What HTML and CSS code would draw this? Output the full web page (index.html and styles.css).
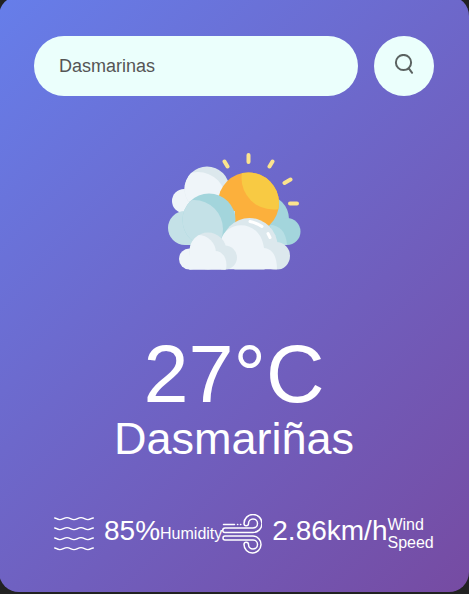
FILE: index.html
```
<!DOCTYPE html>
<html lang="en">
<head>
<meta charset="utf-8">
<meta name="viewport" content="width=device-width, initial-scale=1">
<title>Weather</title>
<link rel="stylesheet" href="styles.css">
</head>
<body>
<main class="card">
  <form class="search">
    <input class="search-input" type="text" aria-label="City name" value="Dasmarinas" spellcheck="false">
    <button class="search-button" type="button" aria-label="Search">
      <svg width="24" height="24" viewBox="0 0 24 24" fill="none" stroke="#5b6361" stroke-width="2" stroke-linecap="round"><circle cx="11.500" cy="8.500" r="7.600"/><path d="M15.500 15.300l1.300-.9 3.300 4.400"/></svg>
    </button>
  </form>
  <section class="weather">
    <svg class="weather-icon" viewBox="149 126 170 170" aria-hidden="true">
      <defs>
        <clipPath id="back-cloud"><circle cx="207" cy="189" r="22.500"/></clipPath>
        <clipPath id="middle-cloud"><circle cx="209" cy="220" r="26.500"/></clipPath>
        <clipPath id="sun"><circle cx="248.500" cy="203" r="30.500"/></clipPath>
        <clipPath id="front-cloud"><path d="M221 214h70v55.500h-70z"/></clipPath>
        <clipPath id="small-cloud"><circle cx="208" cy="251" r="18.500"/></clipPath>
      </defs>
      <path d="M248.500 155v7M272.500 161.500l-3 5M290.500 179.500l-6 3.500M290 203.500h7M224.500 161.500l3 5" stroke="#fbe38e" stroke-width="4" stroke-linecap="round"/>
      <circle cx="184" cy="201" r="12" fill="#eff5f9"/>
      <circle cx="207" cy="189" r="22.500" fill="#dce8ed"/>
      <circle cx="198" cy="200" r="28" fill="#eff5f9" clip-path="url(#back-cloud)"/>
      <circle cx="265" cy="219" r="24" fill="#a3d5dc"/>
      <circle cx="287" cy="231.500" r="13.500" fill="#a3d5dc"/>
      <circle cx="248.500" cy="203" r="30.500" fill="#fcb03c"/>
      <circle cx="273" cy="178" r="31.500" fill="#f8ca43" clip-path="url(#sun)"/>
      <path d="M185 211h50v34h-50z" fill="#c4e1e7"/>
      <circle cx="185" cy="228" r="17" fill="#c4e1e7"/>
      <circle cx="209" cy="220" r="26.500" fill="#a3d5dc"/>
      <circle cx="194" cy="229" r="29" fill="#c4e1e7" clip-path="url(#middle-cloud)"/>
      <path d="M270 225c9 0 16 6 17 20h-12z" fill="#b8dfe5"/>
      <g clip-path="url(#front-cloud)">
        <circle cx="249.500" cy="246" r="28" fill="#dce8ed"/>
        <circle cx="276" cy="256" r="14" fill="#dce8ed"/>
        <path d="M221 269.500V240c5-20 39-22 43 8 8 1 13 7 13 21.500z" fill="#eff5f9"/>
        <path d="M250 221.500c5 1 9 3 12 5m6 7l2 4" fill="none" stroke="#fff" stroke-width="3" stroke-linecap="round"/>
      </g>
      <path d="M189 249h36v20.500h-36z" fill="#eff5f9"/>
      <circle cx="189.500" cy="259" r="10.500" fill="#eff5f9"/>
      <circle cx="225" cy="257.500" r="12" fill="#dce8ed"/>
      <circle cx="208" cy="251" r="18.500" fill="#dce8ed"/>
      <circle cx="198" cy="253" r="18" fill="#eff5f9" clip-path="url(#small-cloud)"/>
      <path d="M190 269.500V251h25c8 0 13 8 11 18.500z" fill="#eff5f9"/>
    </svg>
    <h1 class="temp">27°C</h1>
    <h2 class="city">Dasmariñas</h2>
    <div class="details">
      <div class="col">
        <svg class="detail-icon" viewBox="0 0 40 40" fill="none" stroke="#fff" stroke-width="1.400" stroke-linecap="round" aria-hidden="true">
          <path id="wave" d="M.7 4c2 0 2 1.600 5 1.600S10 3.600 13 3.600s4 2 7 2 4-2 7-2 4 2 7 2 3-1.600 5.300-1.600"/>
          <use href="#wave" y="10"/><use href="#wave" y="20"/><use href="#wave" y="30"/>
        </svg>
        <p class="value">85%</p>
        <p class="label">Humidity</p>
      </div>
      <div class="col">
        <svg class="detail-icon" viewBox="0 0 40 40" fill="none" stroke="#fff" stroke-width="1.500" stroke-linecap="round" stroke-linejoin="round" aria-hidden="true">
          <path d="M1.500 10.500h11M15.500 10.500h.3M18.500 10.500h.3"/>
          <path d="M3 14h28a4.500 4.500 0 1 0-4.500-4.500 2.250 2.250 0 0 1-4.500 0 9 9 0 1 1 9 9H3a2.250 2.250 0 0 1 0-4.500z"/>
          <path d="M3 22h28a8.500 8.500 0 1 1-9 8.500 2.200 2.200 0 0 1 4.500 0 4.500 4.500 0 1 0 4.500-4.500H3a2 2 0 0 1 0-4z"/>
        </svg>
        <p class="value">2.86km/h</p>
        <p class="label">Wind Speed</p>
      </div>
    </div>
  </section>
</main>
</body>
</html>
```
FILE: styles.css
```
* {
  box-sizing: border-box;
  margin: 0;
  padding: 0;
  font-family: "Liberation Sans", Arial, sans-serif;
}

body {
  background: #222;
  overflow: hidden;
}

.card {
  margin: -4px 0 0 -1px;
  padding: 40px 35px 38px;
  border-radius: 20px;
  background: linear-gradient(135deg, #667eea, #764ba2);
  color: #fff;
  text-align: center;
}

.search {
  display: flex;
  gap: 16px;
}

.search-input {
  flex: 1;
  min-width: 0;
  height: 60px;
  padding: 10px 25px;
  border: 0;
  outline: 0;
  border-radius: 30px;
  background: #ebfffc;
  color: #555;
  font-size: 18px;
}

.search-button {
  display: grid;
  place-items: center;
  width: 60px;
  height: 60px;
  border: 0;
  border-radius: 50%;
  background: #ebfffc;
  cursor: pointer;
}

.weather-icon {
  display: block;
  width: 170px;
  height: 170px;
  margin: 30px auto 36px;
}

.temp {
  font-size: 81px;
  font-weight: 400;
  line-height: 84px;
}

.city {
  font-size: 45px;
  font-weight: 400;
  line-height: 46px;
}

.details {
  display: flex;
  margin-top: 52px;
  padding-left: 20px;
  text-align: left;
}

.col {
  display: flex;
  align-items: center;
}

.detail-icon {
  flex: none;
  width: 40px;
  height: 40px;
  margin-right: 10px;
}

.value {
  margin-top: -6px;
  font-size: 28px;
  line-height: 32px;
}

.label {
  width: min-content;
  font-size: 16px;
  line-height: 18px;
}
```
